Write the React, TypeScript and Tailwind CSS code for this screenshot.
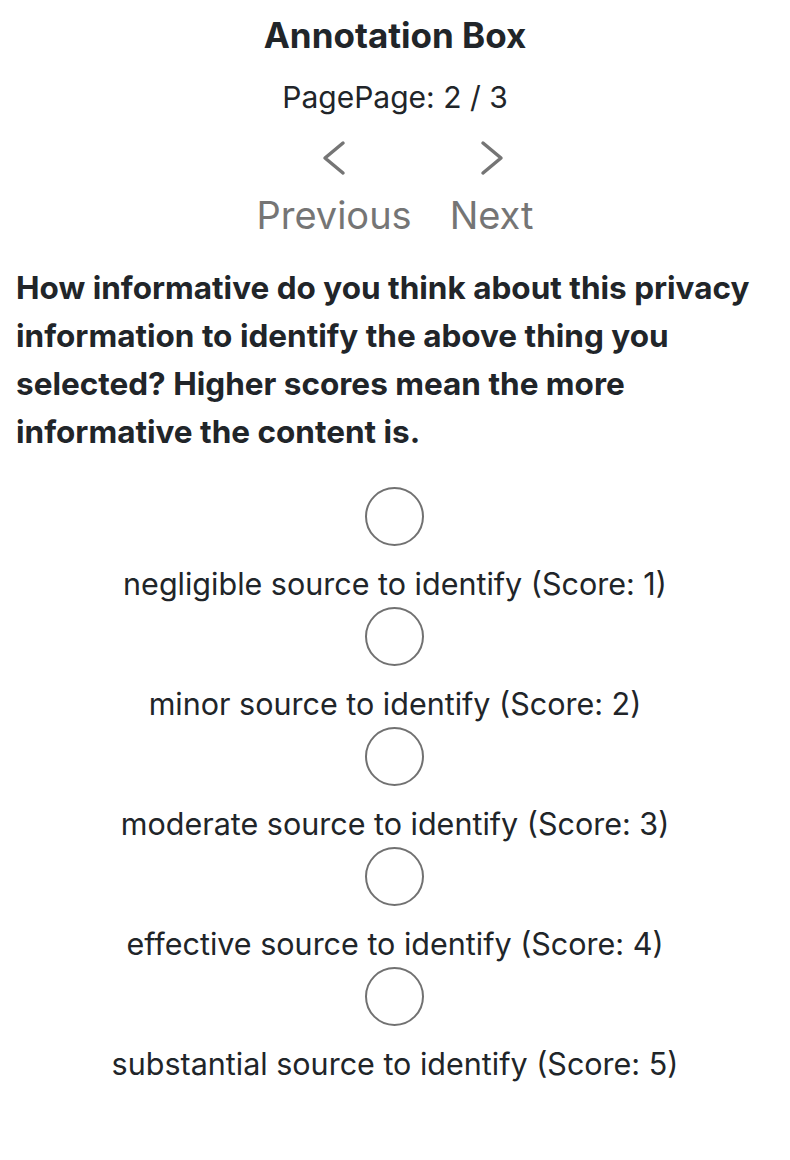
const options = [
  "negligible source to identify (Score: 1)",
  "minor source to identify (Score: 2)",
  "moderate source to identify (Score: 3)",
  "effective source to identify (Score: 4)",
  "substantial source to identify (Score: 5)",
];

const Chevron = ({ dir }: { dir: "left" | "right" }) => (
  <svg width="24" height="36" viewBox="0 0 24 36" fill="none" stroke="#757575" strokeWidth="3.5" strokeLinecap="round" strokeLinejoin="round">
    {dir === "left" ? <polyline points="21,3 3,18 21,33" /> : <polyline points="3,3 21,18 3,33" />}
  </svg>
);

export default function App() {
  return (
    <div className="min-h-screen bg-white text-[#212529] font-['Inter',sans-serif]">
      <div className="flex flex-col items-center pt-[14px]">
        <h1 className="text-[35px] font-bold leading-[42px]">Annotation Box</h1>
        <p className="mt-[21px] text-[30px] leading-[40px]">PagePage: 2 / 3</p>
        <div className="mt-[23px] flex gap-[38px] text-[38px] text-[#757575] leading-[44px]">
          <button className="flex flex-col items-center">
            <Chevron dir="left" />
            <span className="mt-[17px]">Previous</span>
          </button>
          <button className="flex flex-col items-center">
            <Chevron dir="right" />
            <span className="mt-[17px]">Next</span>
          </button>
        </div>
      </div>
      <p className="mt-[27px] px-4 text-[31.5px] font-bold leading-[48px]">
        How informative do you think about this privacy information to identify the above thing you selected? Higher scores mean the more informative the content is.
      </p>
      <div className="mt-[31px] flex flex-col items-center">
        {options.map((o) => (
          <label key={o} className="flex flex-col items-center">
            <span className="h-[59px] w-[59px] rounded-full border-2 border-[#717171] bg-white" />
            <span className="mt-[18px] mb-[3px] text-[30.5px] leading-[40px]">{o}</span>
          </label>
        ))}
      </div>
    </div>
  );
}
